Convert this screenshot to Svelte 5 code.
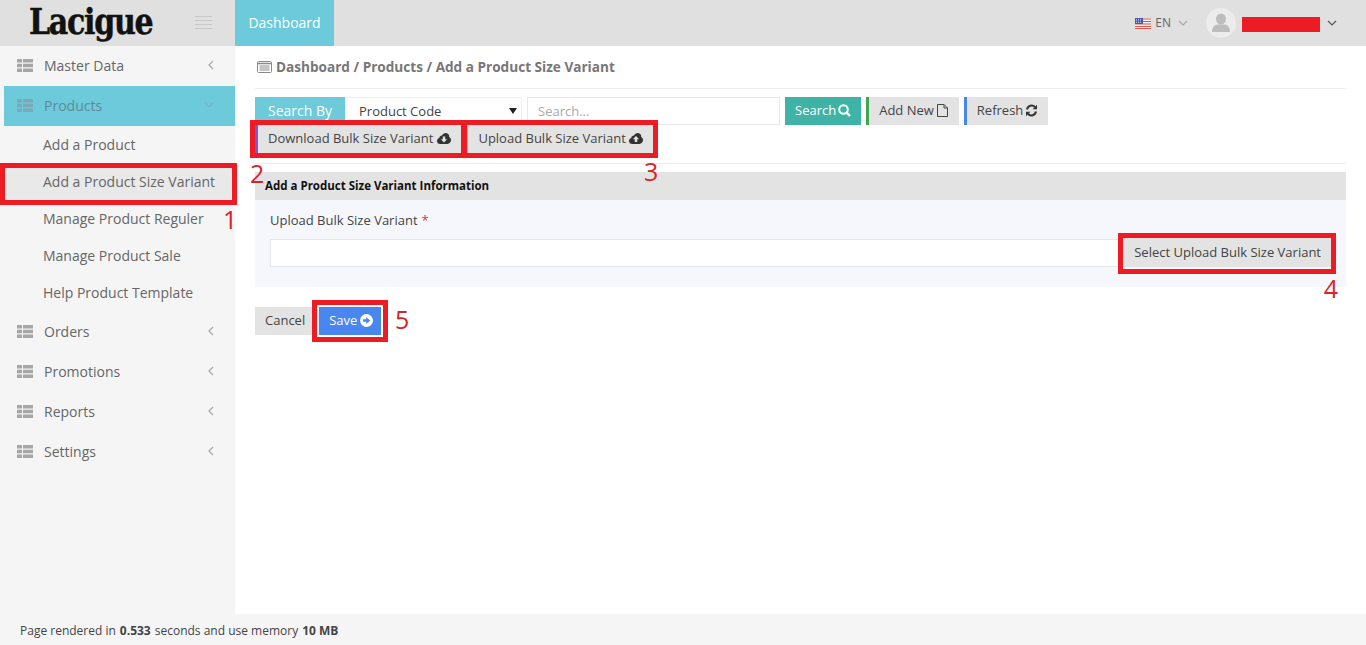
<script>
  const menuTop = ['Master Data'];
  const subs = ['Add a Product', 'Add a Product Size Variant', 'Manage Product Reguler', 'Manage Product Sale', 'Help Product Template'];
  const menuBottom = ['Orders', 'Promotions', 'Reports', 'Settings'];
</script>

{#snippet gridIcon()}
  <svg class="gi" width="16" height="13" viewBox="0 0 16 13" aria-hidden="true">
    <path d="M0 0h5v3.600H0zM6 0h10v3.600H6zM0 4.700h5v3.600H0zM6 4.700h10v3.600H6zM0 9.400h5V13H0zM6 9.400h10V13H6z" />
  </svg>
{/snippet}

{#snippet chevLeft()}
  <svg class="chev" width="8" height="12" viewBox="0 0 8 12" aria-hidden="true"><path d="M6 2L2 6l4 4" fill="none" stroke="#aaa" stroke-width="1.300" /></svg>
{/snippet}

{#snippet chevDown(color)}
  <svg width="10" height="6" viewBox="0 0 10 6" aria-hidden="true"><path d="M1 1l4 4 4-4" fill="none" stroke={color} stroke-width="1.200" /></svg>
{/snippet}

{#snippet cloud(up)}
  <svg class="ic cl" width="14" height="11" viewBox="0 0 14 11" aria-hidden="true">
    <path fill="#333" d="M3.200 11C1.400 11 0 9.700 0 8c0-1.400.9-2.500 2.200-2.900C2.300 3.600 3.500 2.500 5 2.600 5.700 1 7.100 0 8.600 0c2 0 3.600 1.500 3.600 3.500v.4C13.300 4.400 14 5.500 14 6.800 14 9.100 12.400 11 10.400 11z" />
    {#if up}
      <path fill="#e3e3e3" d="M7 3L3.900 6.200H5.800V9H8.200V6.200H10.100z" />
    {:else}
      <path fill="#e3e3e3" d="M7 9.500L3.900 6.300H5.800V3.500H8.200V6.300H10.100z" />
    {/if}
  </svg>
{/snippet}

<div class="page">
  <header class="top">
    <div class="brand">
      <span class="logo">Lacigue</span>
      <svg class="burger" width="17" height="13" viewBox="0 0 17 13" aria-hidden="true">
        <path d="M0 .5h17M0 4.500h17M0 8.500h17M0 12.500h17" stroke="#c8c8c8" stroke-width="1" />
      </svg>
    </div>
    <div class="tab">Dashboard</div>
    <div class="right">
      <svg class="flag" width="16" height="11" viewBox="0 0 16 11" aria-hidden="true">
        <rect width="16" height="11" fill="#f4f4f4" />
        <path d="M0 1h16M0 3.500h16M0 6h16M0 8.500h16M0 10.500h16" stroke="#d9574f" stroke-width="1" />
        <rect width="8" height="6" fill="#4a5ba8" />
        <path d="M1 1.500h6M1 3h6M1 4.500h6" stroke="#dfe3f3" stroke-width=".7" stroke-dasharray="1 1" />
      </svg>
      <span class="lang">EN</span>
      <span class="langchev">{@render chevDown('#a8a8a8')}</span>
      <span class="avatar">
        <svg width="30" height="30" viewBox="0 0 30 30" aria-hidden="true">
          <circle cx="15" cy="15" r="15" fill="#ececec" />
          <ellipse cx="15" cy="11" rx="5" ry="5.500" fill="#bdbdbd" />
          <path d="M6 24c0-5 3-7.500 5.500-7.500h7c2.500 0 5.500 2.500 5.500 7.500z" fill="#bdbdbd" />
        </svg>
      </span>
      <span class="redact"></span>
      <span class="userchev">{@render chevDown('#555')}</span>
    </div>
  </header>

  <div class="middle">
    <aside class="side">
      {#each menuTop as m}
        <div class="mi">{@render gridIcon()}<span class="ml">{m}</span>{@render chevLeft()}</div>
      {/each}
      <div class="mi active">{@render gridIcon()}<span class="ml">Products</span><span class="chevd">{@render chevDown('#7fb0bf')}</span></div>
      <div class="subs">
        {#each subs as s, i}
          <div class="si" class:cur={i === 1}>{s}</div>
        {/each}
      </div>
      {#each menuBottom as m}
        <div class="mi">{@render gridIcon()}<span class="ml">{m}</span>{@render chevLeft()}</div>
      {/each}
      <div class="mark box-side"></div>
      <span class="num n1">1</span>
    </aside>

    <main class="main">
      <div class="crumb">
        <svg width="15" height="12" viewBox="0 0 15 12" aria-hidden="true">
          <rect x=".5" y=".5" width="14" height="11" rx="1" fill="none" stroke="#8a8a8a" />
          <path d="M0 2.500h15" stroke="#8a8a8a" stroke-width="1.500" />
          <path d="M2.500 5h10M2.500 7h10M2.500 9h10" stroke="#8a8a8a" />
        </svg>
        <b>Dashboard / Products / Add a Product Size Variant</b>
      </div>

      <div class="bar">
        <div class="row r1">
          <span class="sb">Search By</span>
          <span class="selw"><select class="sel"><option>Product Code</option></select></span>
          <input class="search" placeholder="Search..." />
          <button class="btn teal">Search
            <svg class="ic tight" width="13" height="13" viewBox="0 0 13 13" aria-hidden="true"><circle cx="5.500" cy="5.500" r="4.300" fill="none" stroke="#fff" stroke-width="2" /><path d="M8.500 8.500l3.500 3.500" stroke="#fff" stroke-width="2.400" /></svg>
          </button>
          <button class="btn gr ln green addn">Add New
            <svg class="ic" width="11" height="13" viewBox="0 0 11 13" aria-hidden="true"><path d="M.5.500h6.500l3.500 3.500v8.500H.5zM7 .5V4h3.500" fill="none" stroke="#444" /></svg>
          </button>
          <button class="btn gr ln blue">Refresh
            <svg class="ic tight" width="13" height="13" viewBox="0 0 13 13" aria-hidden="true"><path d="M2 5.500A4.700 4.700 0 0 1 10 3M11 7.500A4.700 4.700 0 0 1 3 10" fill="none" stroke="#333" stroke-width="2" /><path d="M12 .8v4.400H7.600zM1 12.200V7.800h4.400z" fill="#333" /></svg>
          </button>
        </div>
        <div class="row r2">
          <button class="btn gr ln purple">Download Bulk Size Variant {@render cloud(false)}</button>
          <button class="btn gr ln orange">Upload Bulk Size Variant {@render cloud(true)}</button>
          <div class="mark box-dl"></div>
          <div class="mark box-ul"></div>
          <span class="num n2">2</span>
          <span class="num n3">3</span>
        </div>
      </div>

      <section class="panel">
        <h3>Add a Product Size Variant Information</h3>
        <div class="pbody">
          <div class="lab">Upload Bulk Size Variant <span class="req">*</span></div>
          <div class="upl">
            <input class="file" />
            <button class="btn gr sel-btn">Select Upload Bulk Size Variant</button>
            <div class="mark box-sel"></div>
            <span class="num n4">4</span>
          </div>
        </div>
      </section>

      <div class="actions">
        <button class="btn gr cancel">Cancel</button>
        <button class="btn save">Save
          <svg class="ic" width="13" height="13" viewBox="0 0 13 13" aria-hidden="true"><circle cx="6.500" cy="6.500" r="6.500" fill="#fff" /><path d="M3 5.300h3.200V3L10.200 6.500 6.200 10V7.700H3z" fill="#4a86f0" /></svg>
        </button>
        <div class="mark box-save"></div>
        <span class="num n5">5</span>
      </div>
    </main>
  </div>

  <footer class="foot">Page rendered in <b>0.533</b> seconds and use memory <b>10 MB</b></footer>
</div>

<style>
  :global(body) { margin: 0; background: #fff; }
  .page {
    width: 1366px; height: 645px; display: flex; flex-direction: column; overflow: hidden;
    font-family: "Open Sans", "Liberation Sans", sans-serif; font-size: 13px; color: #555;
  }
  .top { height: 46px; background: #e0e0e0; display: flex; flex: none; }
  .brand { width: 235px; display: flex; align-items: center; position: relative; box-sizing: border-box; padding-left: 29px; }
  .logo { font-family: "DejaVu Serif", serif; font-weight: 700; font-size: 35px; color: #111; letter-spacing: -1.500px; line-height: 44px; width: 166px; height: 46px; transform: scaleX(.86); transform-origin: left center; -webkit-text-stroke: .5px #111; }
  .burger { display: block; margin-top: -1px; }
  .tab { width: 99px; background: #6ccadb; color: #fff; display: flex; align-items: center; justify-content: center; font-size: 14px; padding-bottom: 2px; box-sizing: border-box; }
  .right { margin-left: auto; display: flex; align-items: center; padding-right: 29px; }
  .flag { margin-right: 4px; margin-left: -1px; }
  .lang { font-size: 12px; color: #666; margin-bottom: 1px; }
  .langchev { margin: 0 17px 0 7px; display: flex; }
  .avatar { display: flex; margin-right: 6px; margin-left: 1px; }
  .redact { width: 78px; height: 15px; background: #ed1c24; margin-top: 2px; }
  .userchev { margin-left: 7px; display: flex; }

  .middle { flex: 1; display: flex; min-height: 0; }
  .side { width: 235px; background: #f5f5f5; flex: none; position: relative; }
  .mi { height: 40px; box-sizing: border-box; padding-bottom: 2px; display: flex; align-items: center; padding-left: 18px; padding-right: 20px; color: #666; font-size: 14px; }
  .mi.active { background: #6ccadb; margin-left: 4px; padding-left: 14px; color: #5f8b99; }
  .gi { fill: #a6a6a6; flex: none; margin-left: -1px; margin-right: 1px; }
  .active .gi { fill: #7aa9b8; }
  .ml { margin-left: 10px; flex: 1; }
  .chevd { display: flex; margin-right: 1px; }
  .subs { padding: 1px 0 0; }
  .si { height: 37px; box-sizing: border-box; padding-bottom: 2px; display: flex; align-items: center; padding-left: 43px; font-size: 14px; color: #666; }
  .si.cur { background: #e9e9e9; margin-left: 4px; padding-left: 39px; }

  .main { flex: 1; padding: 0 20px 0 20px; min-width: 0; position: relative; }
  .crumb { height: 43px; box-sizing: border-box; padding: 0 0 1px 2px; border-bottom: 1px solid #eee; display: flex; align-items: center; gap: 4px; color: #777; font-size: 13.600px; }
  .crumb b { font-weight: 700; }
  .bar { padding-top: 8px; height: 66px; border-bottom: 1px solid #eee; }
  .row { display: flex; height: 28px; gap: 5px; position: relative; }
  .sb { width: 90px; background: #6ccadb; color: #fff; display: flex; align-items: center; justify-content: center; font-size: 14px; margin-right: -5px; box-sizing: border-box; padding-bottom: 2px; }
  .selw { position: relative; display: block; width: 177px; height: 28px; }
  .selw::after { content: ""; position: absolute; right: 5px; top: 11px; border: 4px solid transparent; border-top: 6px solid #222; border-bottom: 0; pointer-events: none; }
  .sel { appearance: none; width: 177px; height: 28px; border: 1px solid #eee; background: #fff; font: inherit; color: #444; padding-left: 13px; border-radius: 0; }
  .search { width: 253px; height: 28px; box-sizing: border-box; border: 1px solid #e8e8e8; padding: 0 10px; font: inherit; outline: none; }
  .search::placeholder { color: #aaa; }
  .btn { border: 0; height: 28px; padding: 0 10px 2px; box-sizing: border-box; font: inherit; color: #444; display: inline-flex; align-items: center; gap: 3px; white-space: nowrap; border-radius: 0; }
  .btn .tight { margin-left: -1px; }
  .btn .cl { margin-left: 1px; }
  .btn.orange .cl { margin-left: 0; }
  .addn { padding-right: 11px; }
  .gr { background: #e3e3e3; }
  .teal { background: #3fb3a6; color: #fff; }
  .ln { border-left: 3px solid; }
  .green { border-left-color: #3ea84f; }
  .blue { border-left-color: #4a86e8; }
  .purple { border-left-color: #7e57c2; }
  .orange { border-left-color: #f0b040; margin-left: -1px; }
  .ic { flex: none; }
  .save { background: #4a86f0; color: #fff; padding-right: 8px; }
  .cancel { padding-right: 8px; }

  .panel { margin-top: 8px; }
  .panel h3 { margin: 0; height: 28px; box-sizing: border-box; padding-bottom: 2px; background: #e3e3e3; color: #111; font-size: 11.500px; font-weight: 700; display: flex; align-items: center; padding-left: 10px; }
  .pbody { background: #f6f7fd; height: 87px; padding: 4px 12px 0 15px; box-sizing: border-box; }
  .lab { height: 34px; box-sizing: border-box; padding-bottom: 3px; display: flex; align-items: center; gap: 4px; color: #444; }
  .req { color: #d9362b; }
  .upl { display: flex; position: relative; align-items: flex-start; }
  .file { flex: 1; min-width: 0; height: 28px; box-sizing: border-box; border: 1px solid #e6e6ee; background: #fff; margin: 1px 2px 0 0; }
  .sel-btn { padding: 0 13px 2px; height: 29px; }

  .actions { display: flex; gap: 6px; margin-top: 20px; position: relative; }

  .mark { position: absolute; border: 5px solid #ed1c24; box-sizing: border-box; pointer-events: none; }
  .box-side { left: 0; top: 117px; width: 237px; height: 42px; }
  .box-dl { left: -5px; top: -5px; width: 216px; height: 38px; }
  .box-ul { left: 207px; top: -5px; width: 196px; height: 38px; }
  .box-sel { right: -2px; top: -5px; width: 218px; height: 41px; }
  .box-save { left: 57px; top: -7px; width: 76px; height: 42px; }

  .num { position: absolute; color: #d9232a; font-size: 25px; line-height: 30px; font-family: "Open Sans", sans-serif; }
  .n1 { left: 223px; top: 158px; }
  .n2 { left: -5px; top: 33px; }
  .n3 { left: 389px; top: 31px; }
  .n4 { right: -4px; top: 35px; }
  .n5 { left: 140px; top: -3px; }

  .foot { height: 31px; flex: none; box-sizing: border-box; padding-top: 2px; background: #f5f5f5; display: flex; align-items: center; padding-left: 20px; gap: 4px; font-size: 12px; color: #444; }
  .foot b { font-weight: 700; }
</style>
